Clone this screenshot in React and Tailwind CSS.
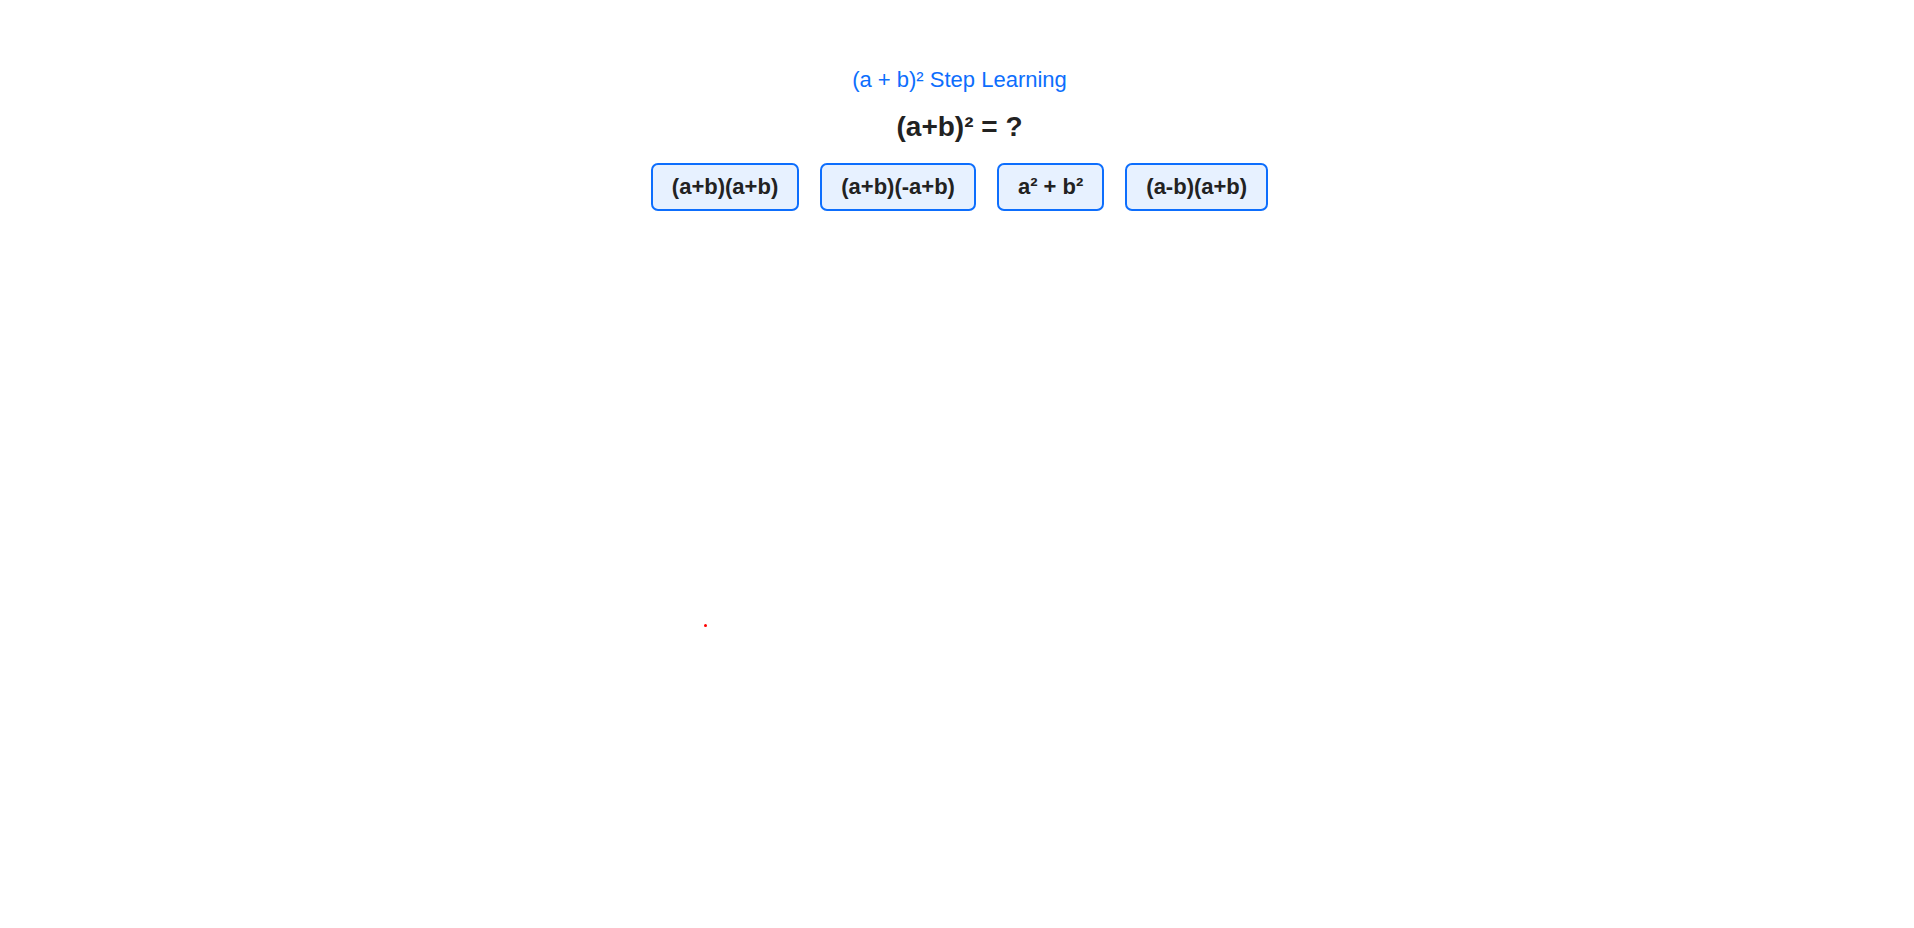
import React from 'react';

const options = ['(a+b)(a+b)', '(a+b)(-a+b)', 'a² + b²', '(a-b)(a+b)'];

export default function App() {
  return (
    <div className="relative min-h-[928px] w-full bg-white font-['Liberation_Sans',Arial,sans-serif]">
      <div className="flex flex-col items-center pl-[5px] pt-[67px]">
        <div className="text-[22px] leading-[25px] text-[#0d6efd]">(a + b)² Step Learning</div>
        <h1 className="mt-[19px] text-[28px] font-bold leading-[32px] text-[#222]">(a+b)² = ?</h1>
        <div className="mt-[20px] flex gap-[21px]">
          {options.map((opt) => (
            <button
              key={opt}
              className="rounded-[7px] border-2 border-[#0d6efd] bg-[#e7f1ff] px-[19px] py-[10px] text-[22px] font-bold leading-[24px] text-[#222]"
            >
              {opt}
            </button>
          ))}
        </div>
      </div>

      {/* stray marker dot */}
      <div className="absolute left-[704px] top-[624px] h-[3px] w-[3px] rounded-full bg-[#ff0000]" />
    </div>
  );
}
